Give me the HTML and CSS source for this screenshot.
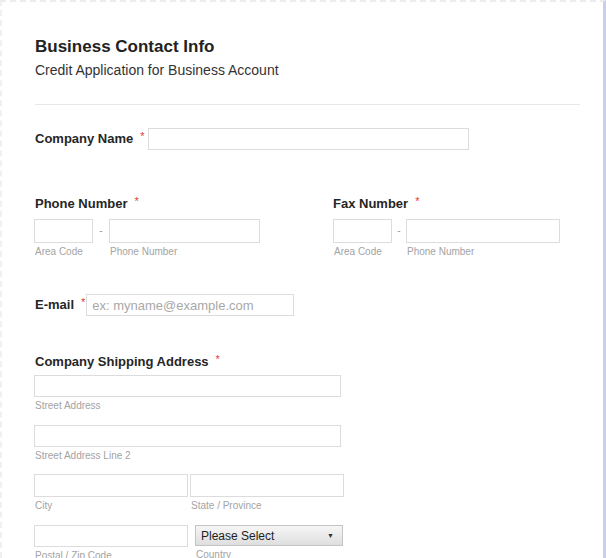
FILE: index.html
```html
<!DOCTYPE html>
<html lang="en">
<head>
<meta charset="utf-8">
<title>Business Contact Info</title>
<link rel="stylesheet" href="styles.css">
</head>
<body>
<div class="frame">
  <form class="form">
    <header class="form-header">
      <h1 class="title">Business Contact Info</h1>
      <p class="subtitle">Credit Application for Business Account</p>
    </header>

    <div class="row row-inline row-company">
      <label class="label">Company Name<span class="req">*</span></label>
      <input class="input input-company" type="text">
    </div>

    <div class="row row-phones">
      <div class="phone-group">
        <label class="label">Phone Number<span class="req">*</span></label>
        <div class="phone-fields">
          <div class="sub">
            <input class="input input-area" type="text">
            <span class="sublabel">Area Code</span>
          </div>
          <span class="dash">-</span>
          <div class="sub">
            <input class="input input-phone" type="text">
            <span class="sublabel">Phone Number</span>
          </div>
        </div>
      </div>
      <div class="phone-group">
        <label class="label">Fax Number<span class="req">*</span></label>
        <div class="phone-fields">
          <div class="sub">
            <input class="input input-area" type="text">
            <span class="sublabel">Area Code</span>
          </div>
          <span class="dash dash-narrow">-</span>
          <div class="sub">
            <input class="input input-phone" type="text">
            <span class="sublabel">Phone Number</span>
          </div>
        </div>
      </div>
    </div>

    <div class="row row-inline row-email">
      <label class="label">E-mail<span class="req">*</span></label>
      <input class="input input-email" type="text" placeholder="ex: myname@example.com">
    </div>

    <div class="row row-address">
      <label class="label">Company Shipping Address<span class="req">*</span></label>
      <div class="sub sub-full">
        <input class="input input-street" type="text">
        <span class="sublabel">Street Address</span>
      </div>
      <div class="sub sub-full sub-full-2">
        <input class="input input-street" type="text">
        <span class="sublabel">Street Address Line 2</span>
      </div>
      <div class="addr-pair">
        <div class="sub">
          <input class="input input-half" type="text">
          <span class="sublabel">City</span>
        </div>
        <div class="sub">
          <input class="input input-half" type="text">
          <span class="sublabel">State / Province</span>
        </div>
      </div>
      <div class="addr-pair addr-pair-last">
        <div class="sub">
          <input class="input input-half input-postal" type="text">
          <span class="sublabel">Postal / Zip Code</span>
        </div>
        <div class="sub sub-select">
          <div class="select"><span>Please Select</span><span class="arrow">&#9660;</span></div>
          <span class="sublabel">Country</span>
        </div>
      </div>
    </div>
  </form>
</div>
</body>
</html>
```

FILE: styles.css
```css
* { box-sizing: border-box; }

html, body {
  margin: 0;
  padding: 0;
  background: #ffffff;
  height: 558px;
  overflow: hidden;
}

body {
  font-family: "Liberation Sans", Arial, sans-serif;
  color: #2b2b2b;
}

.frame {
  width: 606px;
  height: 558px;
  border-top: 2px dashed #ececec;
  border-left: 2px dashed #f0f0f0;
  border-right: 3px solid #c9cdee;
  overflow: hidden;
}

.form {
  padding: 35px 23px 0 33px;
}

.form-header {
  border-bottom: 1px solid #e8e8e8;
  padding-bottom: 25px;
}

.title {
  margin: 0;
  font-size: 17px;
  line-height: 20px;
  font-weight: bold;
  color: #222;
}

.subtitle {
  margin: 5px 0 0;
  font-size: 14px;
  line-height: 17px;
  color: #333;
}

.row-inline {
  display: flex;
  align-items: center;
}

.row-company { margin-top: 23px; }

.label {
  font-size: 13px;
  line-height: 16px;
  font-weight: bold;
  color: #262626;
  display: block;
}

.row-inline .label { display: inline-block; }

.req {
  color: #e53935;
  font-weight: normal;
  font-size: 11px;
  margin-left: 7px;
  position: relative;
  top: -3px;
}

.input {
  display: block;
  height: 22px;
  border: 1px solid #dcdcdc;
  background: #fff;
  padding: 0 5px;
  font-family: "Liberation Sans", Arial, sans-serif;
  font-size: 13px;
  color: #333;
  margin: 0;
  border-radius: 0;
}

.input::placeholder { color: #a8a8a8; }

.input-company { width: 321px; margin-left: 3px; }

.row-phones {
  margin-top: 46px;
  display: grid;
  grid-template-columns: 298px auto;
}

.phone-fields {
  display: flex;
  align-items: flex-start;
  margin-top: 7px;
}

.phone-group:first-child .phone-fields { margin-left: -1px; }

.sub {
  display: flex;
  flex-direction: column;
}

.sublabel {
  font-size: 10px;
  line-height: 12px;
  color: #a3a3a3;
  margin-top: 3px;
  padding-left: 1px;
}

.input-area { width: 59px; height: 24px; }
.input-phone { width: 151px; height: 24px; }
.phone-group:last-child .input-phone { width: 154px; }

.dash {
  width: 16px;
  text-align: center;
  font-size: 10px;
  line-height: 24px;
  color: #999;
}

.dash-narrow { width: 14px; }

.row-email { margin-top: 36px; }

.input-email { width: 208px; margin-left: 1px; padding-left: 5px; }

.row-address { margin-top: 38px; }

.row-address > .label { margin-bottom: 5px; }

.row-address .sub { margin-left: -1px; }

.sub-full { margin-bottom: 13px; }
.sub-full-2 { margin-bottom: 12px; }

.input-street { width: 307px; }

.addr-pair {
  display: flex;
  gap: 3px;
  margin-bottom: 13px;
}

.input-half { width: 154px; height: 23px; }
.input-postal { height: 22px; }

.row-address .sub-select { margin-left: 4px; }

.select {
  width: 148px;
  height: 21px;
  border: 1px solid #c4c4c4;
  background: linear-gradient(#f6f6f6, #dedede);
  display: flex;
  align-items: center;
  justify-content: space-between;
  padding: 0 8px 0 5px;
  font-size: 12px;
  color: #1e1e1e;
}

.arrow {
  font-size: 7px;
  color: #333;
}
```
